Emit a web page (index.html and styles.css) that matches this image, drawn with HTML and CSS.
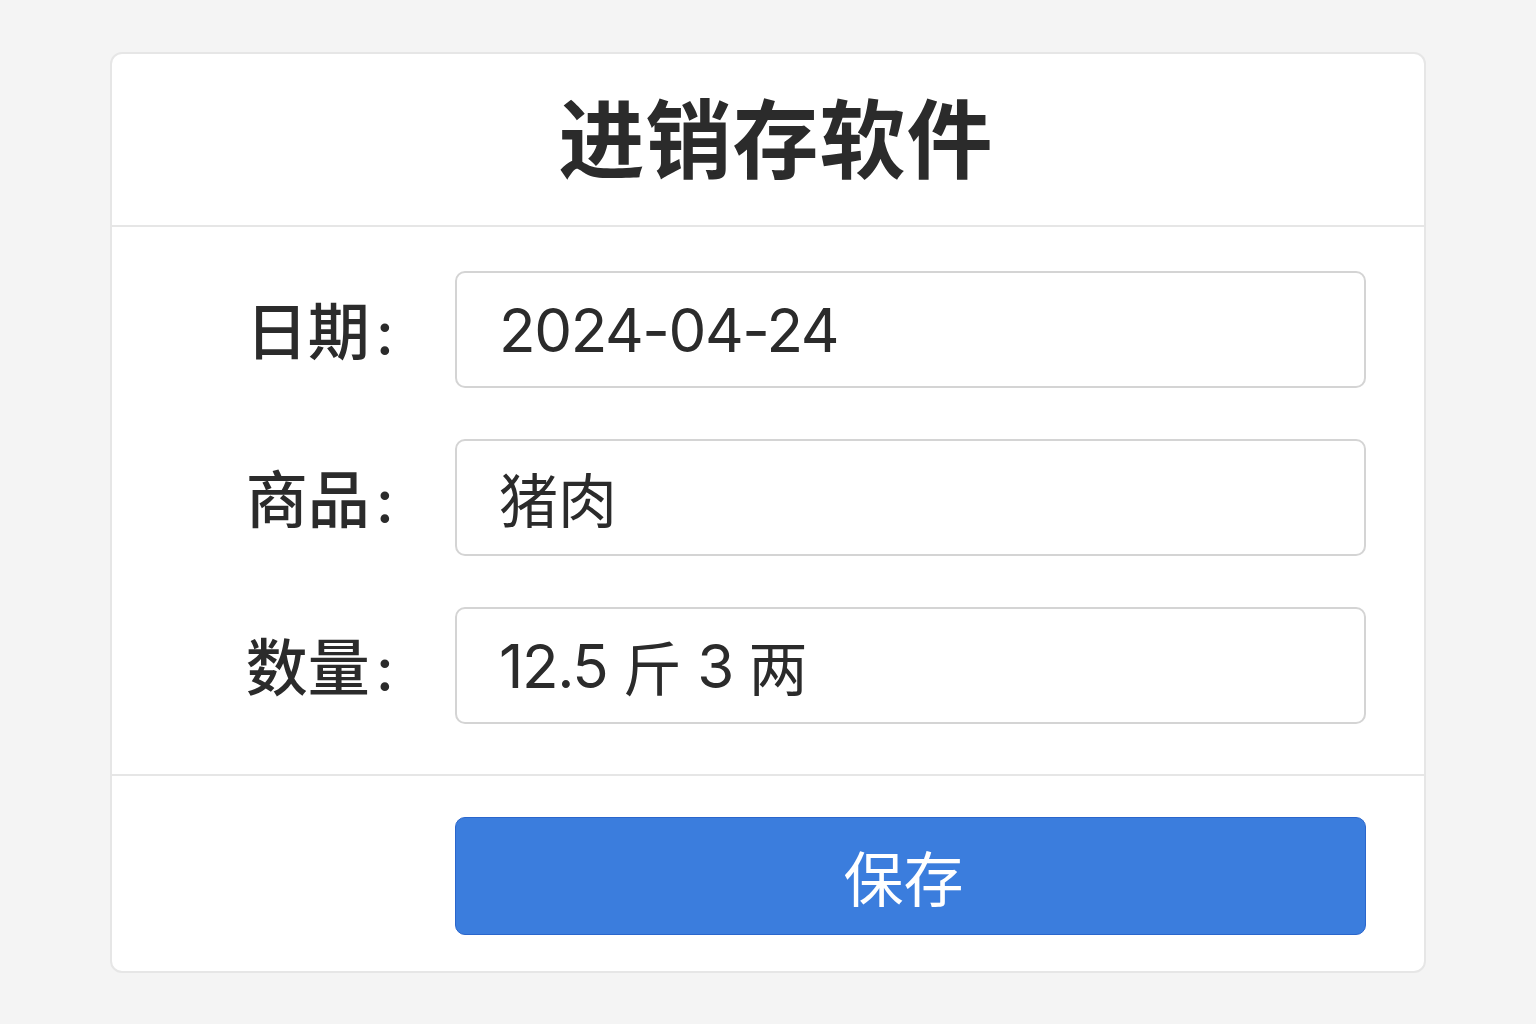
FILE: index.html
```html
<!DOCTYPE html>
<html lang="zh-CN">
<head>
<meta charset="utf-8">
<title>进销存软件</title>
<link rel="stylesheet" href="styles.css">
</head>
<body>
<div class="card">
  <div class="card-header">
    <h1 class="title">进销存软件</h1>
  </div>
  <div class="card-body">
    <div class="row">
      <label class="label">日期<span class="colon">:</span></label>
      <div class="input"><span class="num">2024-04-24</span></div>
    </div>
    <div class="row">
      <label class="label">商品<span class="colon">:</span></label>
      <div class="input">猪肉</div>
    </div>
    <div class="row">
      <label class="label">数量<span class="colon">:</span></label>
      <div class="input"><span class="num">12.5&nbsp;</span>斤<span class="num">&nbsp;3&nbsp;</span>两</div>
    </div>
  </div>
  <div class="card-footer">
    <div class="spacer"></div>
    <button class="btn">保存</button>
  </div>
</div>
</body>
</html>
```
FILE: styles.css
```css
* { box-sizing: border-box; }
html, body { margin: 0; padding: 0; }
body {
  background: #f4f4f4;
  font-family: "Noto Sans CJK SC", "Noto Sans", sans-serif;
  color: #2b2b2b;
  padding: 52px 0 0 110px;
}
.card {
  width: 1316px;
  height: 921px;
  background: #ffffff;
  border: 2px solid #e6e6e6;
  border-radius: 12px;
  display: flex;
  flex-direction: column;
}
.card-header {
  height: 173px;
  border-bottom: 2px solid #e6e6e6;
  display: flex;
  align-items: center;
  justify-content: center;
  padding: 0 0 10px 16px;
}
.title {
  margin: 0;
  font-size: 86px;
  font-weight: 700;
  letter-spacing: 1px;
  color: #2b2b2b;
  line-height: 1;
}
.card-body {
  padding: 44px 58px 50px 58px;
  display: flex;
  flex-direction: column;
  gap: 51px;
  border-bottom: 2px solid #e6e6e6;
}
.row {
  display: grid;
  grid-template-columns: 226px 1fr;
  column-gap: 59px;
  align-items: center;
}
.label {
  text-align: right;
  font-size: 62px;
  font-weight: 500;
  color: #2b2b2b;
  line-height: 1;
  padding-right: 2px;
}
.colon {
  font-family: "Inter", "Noto Sans", sans-serif;
  font-weight: 500;
  margin-left: 6px;
  font-size: 60px;
}
.input {
  height: 117px;
  border: 2px solid #d4d4d4;
  border-radius: 10px;
  padding: 0 0 0 42px;
  display: flex;
  align-items: center;
  font-size: 59px;
  color: #2b2b2b;
  line-height: 1;
  white-space: pre;
}
.num {
  font-family: "Inter", "Noto Sans", sans-serif;
  font-size: 60px;
  font-weight: 400;
  letter-spacing: -1.4px;
}
.card-footer {
  padding: 41px 58px 0 58px;
  display: grid;
  grid-template-columns: 226px 1fr;
  column-gap: 59px;
}
.btn {
  height: 118px;
  background: #3b7ddd;
  border: 1.5px solid #2a66cc;
  border-radius: 10px;
  color: #ffffff;
  font-family: "Noto Sans CJK SC", "Noto Sans", sans-serif;
  font-size: 60px;
  font-weight: 400;
  padding: 0 14px 0 0;
  line-height: 1;
}
```
